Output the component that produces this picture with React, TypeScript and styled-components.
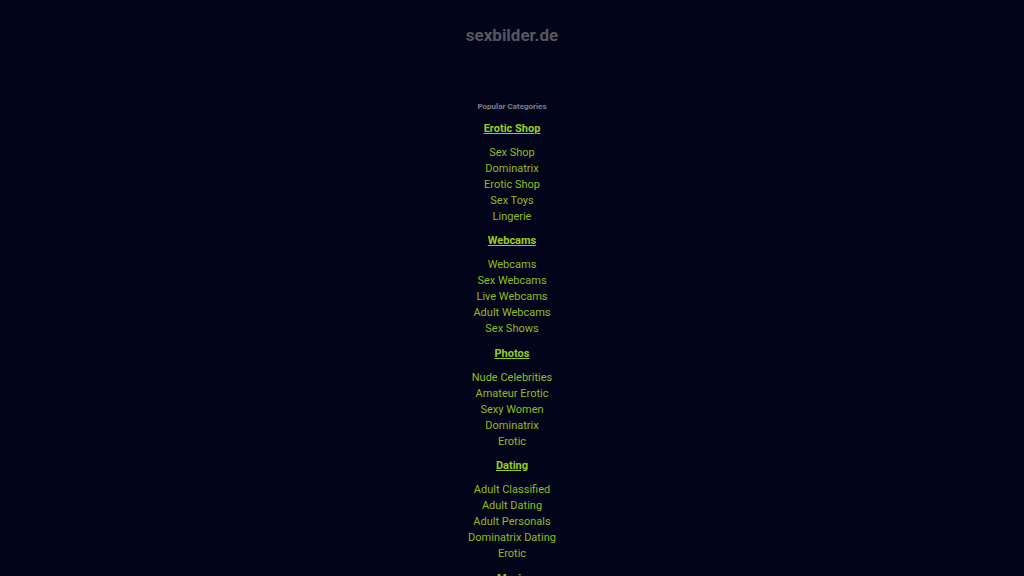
import React from "react";
import styled, { createGlobalStyle } from "styled-components";

const Global = createGlobalStyle`
  html, body { margin: 0; padding: 0; background: #02051a; }
  body { font-family: Roboto, "Noto Sans", "Liberation Sans", sans-serif; }
`;

const Page = styled.div`
  min-height: 576px;
  background: #02051a;
  display: flex;
  flex-direction: column;
  align-items: center;
  padding-top: 25px;
`;

const Title = styled.h1`
  margin: 0;
  font-size: 17px;
  line-height: 20px;
  font-weight: 700;
  color: #55565f;
`;

const Label = styled.div`
  margin-top: 57px;
  font-size: 8px;
  line-height: 10px;
  font-weight: 700;
  color: #7c7d87;
`;

const Section = styled.section`
  display: flex;
  flex-direction: column;
  align-items: center;
`;

const Heading = styled.a`
  margin: 8.5px 0 8px;
  font-size: 11px;
  line-height: 16px;
  font-weight: 700;
  color: #9acd1e;
  text-decoration: underline;
`;

const Item = styled.a`
  font-size: 11px;
  line-height: 16px;
  color: #92bc1e;
  text-decoration: none;
`;

const data: [string, string[]][] = [
  ["Erotic Shop", ["Sex Shop", "Dominatrix", "Erotic Shop", "Sex Toys", "Lingerie"]],
  ["Webcams", ["Webcams", "Sex Webcams", "Live Webcams", "Adult Webcams", "Sex Shows"]],
  ["Photos", ["Nude Celebrities", "Amateur Erotic", "Sexy Women", "Dominatrix", "Erotic"]],
  ["Dating", ["Adult Classified", "Adult Dating", "Adult Personals", "Dominatrix Dating", "Erotic"]],
  ["Movie", ["Sex Movies", "Porn Movies", "Amateur Movies", "Erotic Movies", "Adult Movies"]],
];

export default function App() {
  return (
    <Page>
      <Global />
      <Title>sexbilder.de</Title>
      <Label>Popular Categories</Label>
      {data.map(([h, items]) => (
        <Section key={h}>
          <Heading>{h}</Heading>
          {items.map((it, i) => (
            <Item key={i}>{it}</Item>
          ))}
        </Section>
      ))}
    </Page>
  );
}
